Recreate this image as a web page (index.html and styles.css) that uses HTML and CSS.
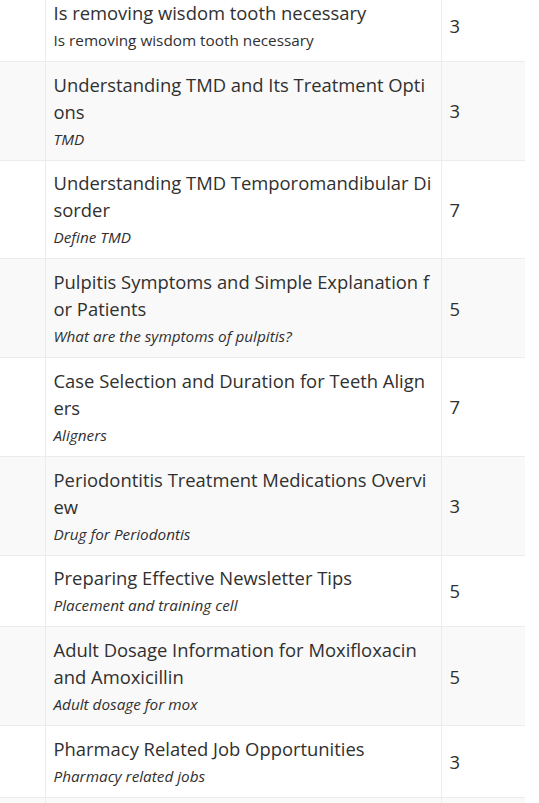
FILE: index.html
```html
<!DOCTYPE html>
<html lang="en">
<head>
<meta charset="utf-8">
<title>Topics</title>
<link rel="stylesheet" href="styles.css">
</head>
<body>
<div class="wrap">
<table class="topics">
  <colgroup>
    <col class="c-blank">
    <col class="c-main">
    <col class="c-count">
  </colgroup>
  <tbody>
    <tr>
      <td class="blank"></td>
      <td class="main"><div class="title">Is removing wisdom tooth necessary</div><div class="sub plain">Is removing wisdom tooth necessary</div></td>
      <td class="count">3</td>
    </tr>
    <tr>
      <td class="blank"></td>
      <td class="main"><div class="title">Understanding TMD and Its Treatment Options</div><div class="sub">TMD</div></td>
      <td class="count">3</td>
    </tr>
    <tr>
      <td class="blank"></td>
      <td class="main"><div class="title">Understanding TMD Temporomandibular Disorder</div><div class="sub">Define TMD</div></td>
      <td class="count">7</td>
    </tr>
    <tr>
      <td class="blank"></td>
      <td class="main"><div class="title">Pulpitis Symptoms and Simple Explanation for Patients</div><div class="sub">What are the symptoms of pulpitis?</div></td>
      <td class="count">5</td>
    </tr>
    <tr>
      <td class="blank"></td>
      <td class="main"><div class="title">Case Selection and Duration for Teeth Aligners</div><div class="sub">Aligners</div></td>
      <td class="count">7</td>
    </tr>
    <tr>
      <td class="blank"></td>
      <td class="main"><div class="title">Periodontitis Treatment Medications Overview</div><div class="sub">Drug for Periodontis</div></td>
      <td class="count">3</td>
    </tr>
    <tr>
      <td class="blank"></td>
      <td class="main"><div class="title">Preparing Effective Newsletter Tips</div><div class="sub">Placement and training cell</div></td>
      <td class="count">5</td>
    </tr>
    <tr>
      <td class="blank"></td>
      <td class="main"><div class="title">Adult Dosage Information for Moxifloxacin<br>and Amoxicillin</div><div class="sub">Adult dosage for mox</div></td>
      <td class="count">5</td>
    </tr>
    <tr>
      <td class="blank"></td>
      <td class="main"><div class="title">Pharmacy Related Job Opportunities</div><div class="sub">Pharmacy related jobs</div></td>
      <td class="count">3</td>
    </tr>
    <tr class="filler">
      <td class="blank"></td>
      <td class="main"></td>
      <td class="count"></td>
    </tr>
  </tbody>
</table>
</div>
</body>
</html>
```
FILE: styles.css
```css
html, body {
  margin: 0;
  padding: 0;
  background: #ffffff;
}

body {
  font-family: "Open Sans", "Noto Sans", "Liberation Sans", sans-serif;
  color: #333333;
  overflow: hidden;
}

.wrap {
  margin-top: -11px;
}

.topics {
  width: 525px;
  table-layout: fixed;
  border-collapse: collapse;
  border-spacing: 0;
}

.c-blank { width: 45px; }
.c-count { width: 84px; }

.topics td {
  border-top: 1px solid #ececec;
  vertical-align: middle;
  padding: 0;
}

.topics tr:nth-child(even) td {
  background: #f9f9f9;
}

.main {
  border-left: 1px solid #ececec;
  border-right: 1px solid #ececec;
  padding: 8.75px 8px 10px 8px !important;
  word-break: break-all;
}

.filler td {
  height: 70px;
}

.title {
  font-size: 18.4px;
  line-height: 27px;
  color: #303030;
}

.sub {
  margin-top: 3px;
  font-size: 15.3px;
  line-height: 22px;
  font-style: italic;
  color: #303030;
}

.sub.plain {
  font-style: normal;
}

.count {
  padding: 0 8px !important;
  font-size: 18.4px;
  line-height: 27px;
  color: #303030;
}
```
